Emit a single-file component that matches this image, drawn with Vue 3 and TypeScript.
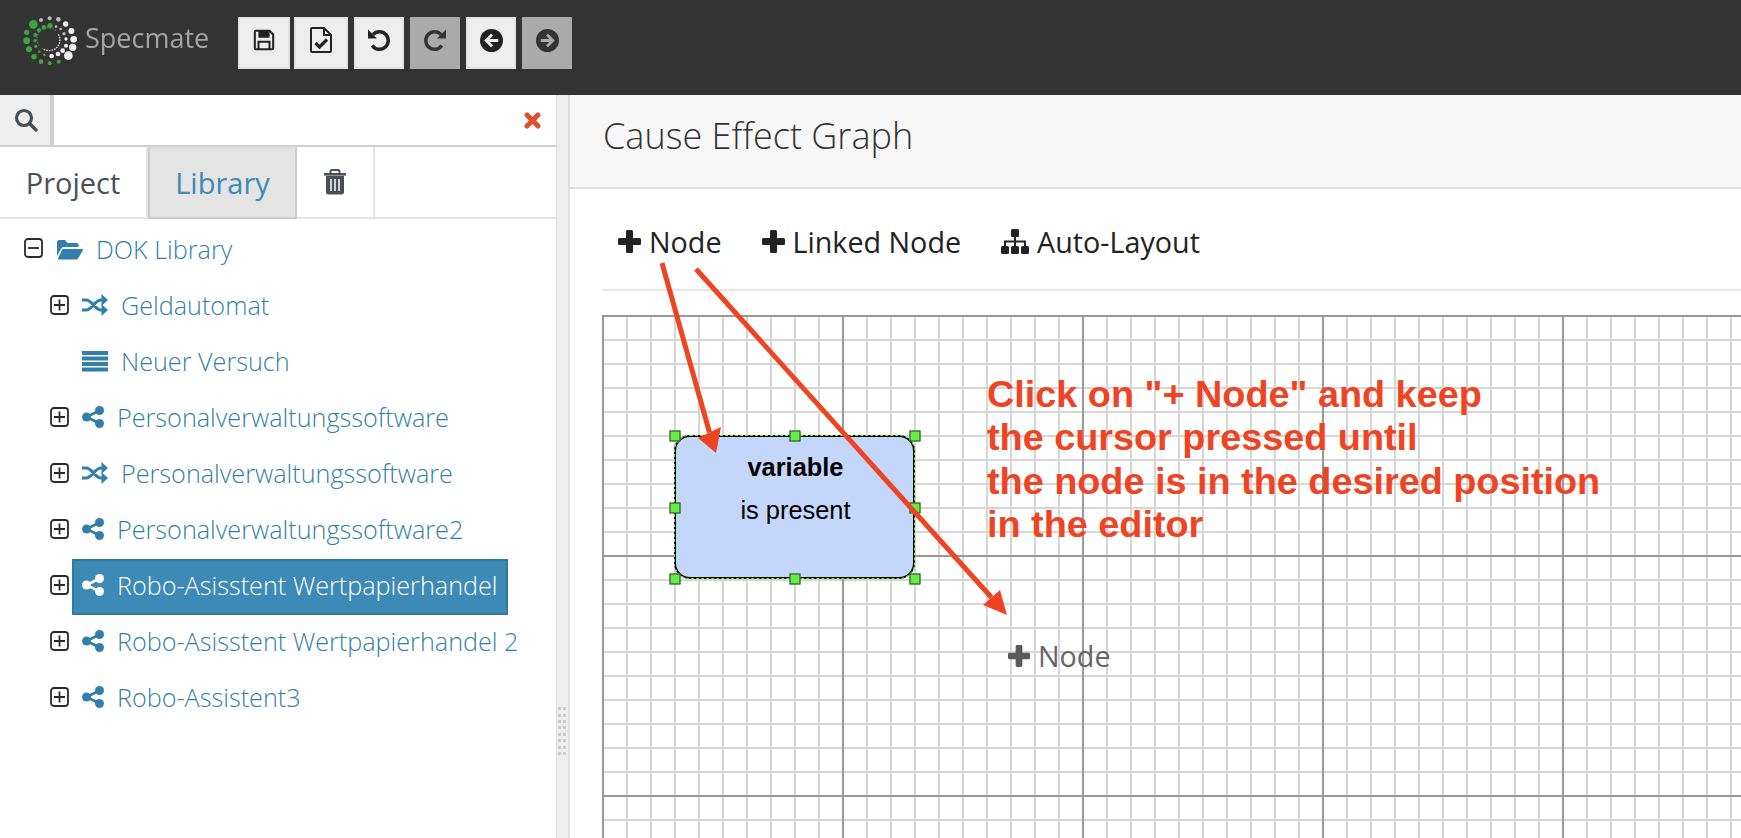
<template>
  <div class="app">
    <!-- top bar -->
    <header class="topbar">
      <div class="brand">
        <svg class="brand__mark" width="75" height="75" viewBox="0 0 225 225">
          <circle v-for="(d, i) in logoDots" :key="i" :cx="d[0]" :cy="d[1]" :r="d[2] + 1" :fill="d[3]" />
          <path d="M88 122A32 32 0 0 1 140 80" fill="none" stroke="#3a8f3a" stroke-width="4" stroke-dasharray="5 3" />
          <path d="M145 88A32 32 0 0 1 98 130" fill="none" stroke="#ddd" stroke-width="4" stroke-dasharray="5 3" />
        </svg>
        <span class="brand__name">Specmate</span>
      </div>
      <div class="actions">
        <button class="btn" style="width: 52px">
          <svg width="22" height="22" viewBox="0 0 24 24" fill="none" stroke="#222" stroke-width="2.2">
            <path d="M2 3a1 1 0 0 1 1-1h15l4 4v15a1 1 0 0 1-1 1H3a1 1 0 0 1-1-1z" />
            <path d="M7 2v6.5h10V2" fill="#222" />
            <path d="M6 22v-8h12v8" />
          </svg>
        </button>
        <button class="btn" style="width: 54px">
          <svg width="22" height="26" viewBox="0 0 22 26" fill="none" stroke="#222" stroke-width="2">
            <path d="M1 2a1 1 0 0 1 1-1h12l7 7v16a1 1 0 0 1-1 1H2a1 1 0 0 1-1-1z" />
            <path d="M14 1v7h7" />
            <path d="M5.500 16l4 4 7.500-7.500" stroke-width="3.200" />
          </svg>
        </button>
        <button class="btn">
          <svg width="24" height="24" viewBox="0 0 24 24">
            <path d="M6 6.500A8.800 8.800 0 1 1 5.200 17.500" fill="none" stroke="#222" stroke-width="3.400" />
            <path d="M1 1.500v9h9z" fill="#222" />
          </svg>
        </button>
        <button class="btn btn--off">
          <svg width="24" height="24" viewBox="0 0 24 24">
            <path d="M18 6.500A8.800 8.800 0 1 0 18.800 17.500" fill="none" stroke="#333" stroke-width="3.400" />
            <path d="M23 1.500v9h-9z" fill="#333" />
          </svg>
        </button>
        <button class="btn">
          <svg width="23" height="23" viewBox="0 0 24 24">
            <circle cx="12" cy="12" r="12" fill="#222" />
            <path d="M19 12H7M12.500 6L6.500 12l6 6" fill="none" stroke="#eee" stroke-width="3" />
          </svg>
        </button>
        <button class="btn btn--off">
          <svg width="23" height="23" viewBox="0 0 24 24">
            <circle cx="12" cy="12" r="12" fill="#333" />
            <path d="M5 12h12M11.500 6l6 6-6 6" fill="none" stroke="#aaa" stroke-width="3" />
          </svg>
        </button>
      </div>
    </header>

    <div class="body">
      <!-- left side panel -->
      <aside class="side">
        <div class="search">
          <div class="search__addon">
            <svg width="24" height="24" viewBox="0 0 24 24" fill="none" stroke="#454d55" stroke-width="3.200">
              <circle cx="10" cy="10" r="7.500" />
              <path d="M15.500 15.500L22 22" stroke-linecap="round" />
            </svg>
          </div>
          <div class="search__input">
            <svg width="17" height="17" viewBox="0 0 17 17" stroke="#e04f2a" stroke-width="5" stroke-linecap="round">
              <path d="M3 3l11 11M14 3L3 14" />
            </svg>
          </div>
        </div>

        <nav class="tabs">
          <div class="tab" style="width: 148px">Project</div>
          <div class="tab tab--active">Library</div>
          <div class="tab tab--trash">
            <svg width="24" height="26" viewBox="0 0 24 26" fill="#4a4f55">
              <path d="M1 4h22v2.600H1z" />
              <path d="M7.500 5V2.500A1.500 1.500 0 0 1 9 1h6a1.500 1.500 0 0 1 1.500 1.500V5" fill="none" stroke="#4a4f55" stroke-width="2" />
              <path d="M3 7h18v16a2.500 2.500 0 0 1-2.500 2.500h-13A2.500 2.500 0 0 1 3 23z" />
              <path d="M8 10v12M12 10v12M16 10v12" stroke="#fff" stroke-width="1.500" />
            </svg>
          </div>
        </nav>

        <div class="tree">
          <div v-for="row in rows" :key="row.label + row.icon" class="tree__row" :class="{ 'tree__row--root': row.icon === 'folder' }">
            <span class="tree__toggle">
              <svg v-if="row.toggle" width="19" height="20" viewBox="0 0 19 20" fill="none" stroke="#2b2b2b" stroke-width="1.800">
                <rect x="1" y="1" width="17" height="18" rx="3" />
                <path v-if="row.toggle === 'plus'" d="M9.500 4.500v11M4 10h11" />
                <path v-else d="M4 10h11" />
              </svg>
            </span>
            <span class="tree__label" :class="{ 'tree__label--selected': row.selected }">
              <svg v-if="row.icon === 'folder'" class="tree__icon" width="26" height="21" viewBox="0 0 26 21" fill="currentColor">
                <path d="M0 17V3a2 2 0 0 1 2-2h6l2.500 3h9a2 2 0 0 1 2 2v2H7a3 3 0 0 0-3 2z" />
                <path d="M6 10h19a1 1 0 0 1 .8 1.500L21 19.500a2 2 0 0 1-1.700 1H2a1 1 0 0 1-.8-1.500L5 11a2 2 0 0 1 1-1z" />
              </svg>
              <svg v-else-if="row.icon === 'shuffle'" class="tree__icon" width="26" height="24" viewBox="0 0 26 24">
                <path d="M0 7h4c6 0 9 10 15 10h2M0 17h4c6 0 9-10 15-10h2" fill="none" stroke="currentColor" stroke-width="3.200" />
                <path d="M19.500 1l6.500 6-6.500 6zM19.500 11l6.500 6-6.500 6z" fill="currentColor" />
              </svg>
              <svg v-else-if="row.icon === 'bars'" class="tree__icon" width="26" height="21" viewBox="0 0 26 21" fill="currentColor">
                <rect y="0" width="26" height="4" />
                <rect y="5.500" width="26" height="4" />
                <rect y="11" width="26" height="4" />
                <rect y="16.500" width="26" height="4" />
              </svg>
              <svg v-else class="tree__icon" width="22" height="22" viewBox="0 0 22 22" fill="currentColor">
                <circle cx="17.500" cy="4.500" r="4.500" />
                <circle cx="17.500" cy="17.500" r="4.500" />
                <circle cx="4.500" cy="11" r="4.500" />
                <path d="M4.500 11L17.500 4.500M4.500 11l13 6.500" stroke="currentColor" stroke-width="2.600" />
              </svg>
              <span>{{ row.label }}</span>
            </span>
          </div>
        </div>
      </aside>

      <!-- splitter -->
      <div class="splitter">
        <div class="splitter__grip">
          <i v-for="n in 16" :key="n"></i>
        </div>
      </div>

      <!-- main panel -->
      <main class="main">
        <h1 class="main__title">Cause Effect Graph</h1>
        <div class="toolbar">
          <span class="tool">
            <svg class="plus" width="23" height="23" viewBox="0 0 23 23" fill="currentColor">
              <rect x="8" y="0" width="7" height="23" rx="1.500" />
              <rect x="0" y="8" width="23" height="7" rx="1.500" />
            </svg>
            Node
          </span>
          <span class="tool">
            <svg class="plus" width="23" height="23" viewBox="0 0 23 23" fill="currentColor">
              <rect x="8" y="0" width="7" height="23" rx="1.500" />
              <rect x="0" y="8" width="23" height="7" rx="1.500" />
            </svg>
            Linked Node
          </span>
          <span class="tool">
            <svg class="plus" width="28" height="25" viewBox="0 0 28 25" fill="currentColor">
              <rect x="10" y="0" width="8" height="8" rx="1.500" />
              <rect x="0" y="17" width="8" height="8" rx="1.500" />
              <rect x="10" y="17" width="8" height="8" rx="1.500" />
              <rect x="20" y="17" width="8" height="8" rx="1.500" />
              <path d="M4 17v-4.500h20V17M14 8v9" fill="none" stroke="currentColor" stroke-width="2" />
            </svg>
            Auto-Layout
          </span>
        </div>

        <div class="canvas">
          <div class="node">
            <div class="node__dash"></div>
            <b class="node__title">variable</b>
            <span class="node__sub">is present</span>
            <div class="node__handles">
              <i v-for="h in handles" :key="h.x + '-' + h.y" class="handle" :style="{ left: h.x + '%', top: h.y + '%' }"></i>
            </div>
          </div>

          <div class="note">
            <div>Click on "+ Node" and keep</div>
            <div>the cursor pressed until</div>
            <div>the node is in the desired position</div>
            <div>in the editor</div>
          </div>

          <div class="ghost">
            <svg class="plus" width="22" height="22" viewBox="0 0 23 23" fill="#5a5a5a">
              <rect x="8" y="0" width="7" height="23" rx="1.500" />
              <rect x="0" y="8" width="23" height="7" rx="1.500" />
            </svg>
            Node
          </div>
        </div>

        <!-- annotation arrows over the panel -->
        <svg class="arrows" width="1171" height="743" viewBox="0 0 1171 743">
          <path d="M92 168L139.500 337.500M126 174L421.500 502.500" stroke="#ef4423" stroke-width="5" fill="none" />
          <path d="M146 358L128 343L151 332zM437 520L413 510L430 495z" fill="#ef4423" />
        </svg>
      </main>
    </div>
  </div>
</template>

<script setup lang="ts">
type Row = {
  label: string;
  icon: 'folder' | 'shuffle' | 'bars' | 'share';
  toggle?: 'plus' | 'minus';
  selected?: boolean;
};

const rows: Row[] = [
  { label: 'DOK Library', icon: 'folder', toggle: 'minus' },
  { label: 'Geldautomat', icon: 'shuffle', toggle: 'plus' },
  { label: 'Neuer Versuch', icon: 'bars' },
  { label: 'Personalverwaltungssoftware', icon: 'share', toggle: 'plus' },
  { label: 'Personalverwaltungssoftware', icon: 'shuffle', toggle: 'plus' },
  { label: 'Personalverwaltungssoftware2', icon: 'share', toggle: 'plus' },
  { label: 'Robo-Asisstent Wertpapierhandel', icon: 'share', toggle: 'plus', selected: true },
  { label: 'Robo-Asisstent Wertpapierhandel 2', icon: 'share', toggle: 'plus' },
  { label: 'Robo-Assistent3', icon: 'share', toggle: 'plus' },
];

const handles = [
  { x: 0, y: 0 }, { x: 50, y: 0 }, { x: 100, y: 0 },
  { x: 0, y: 50 }, { x: 100, y: 50 },
  { x: 0, y: 100 }, { x: 50, y: 100 }, { x: 100, y: 100 },
];

const G = '#3fa63f';
const W = '#f2f2f2';
const S = '#bbbbbb';

// logo dots, traced from the reference at 3x
const logoDots: [number, number, number, string][] = [
  [70, 58, 12, G], [50, 82, 7, G], [50, 107, 9, G], [57, 133, 8, G], [72, 155, 7, G],
  [93, 170, 6, G], [119, 175, 5, G], [146, 170, 5, G], [175, 152, 12, W], [188, 127, 10, W],
  [191, 103, 9, W], [184, 78, 8, W], [167, 57, 7, W], [145, 43, 6, S], [119, 40, 5, S], [93, 45, 5, S],
  [102, 67, 6, G], [120, 62, 7, G], [87, 76, 5, G], [76, 90, 5, G], [75, 107, 4, G], [77, 124, 4, G],
  [88, 140, 3, G], [103, 150, 3, G], [125, 153, 6, W], [144, 147, 6, W], [158, 137, 6, W], [168, 122, 5, W],
  [168, 102, 4, W], [162, 86, 4, S], [152, 72, 3, S], [138, 65, 3, S],
];
</script>

<style>
html,
body {
  margin: 0;
  overflow: hidden;
}
</style>

<style scoped>
.app {
  display: flex;
  flex-direction: column;
  height: 838px;
  font-family: 'Open Sans', 'Liberation Sans', sans-serif;
  background: #fff;
}
.topbar {
  display: flex;
  flex: 0 0 95px;
  background: #333;
}
.brand {
  position: relative;
  width: 238px;
  flex: 0 0 238px;
}
.brand__mark {
  margin: 5px 0 0 10px;
  filter: blur(0.4px);
}
.brand__name {
  position: absolute;
  left: 85px;
  top: 19px;
  font-size: 27px;
  font-weight: 400;
  color: #a5a5a5;
  filter: blur(0.5px);
}
.actions {
  display: flex;
  align-items: flex-start;
  padding-top: 17px;
  gap: 6px;
}
.actions .btn:nth-child(2) {
  margin-left: -2px;
}
.btn {
  display: flex;
  align-items: center;
  justify-content: center;
  width: 50px;
  height: 52px;
  padding: 0 0 6px;
  border: 2px solid #e2e2e2;
  background: #eee;
  box-sizing: border-box;
}
.btn--off {
  border: none;
  background: #aaa;
}
.body {
  flex: 1;
  display: flex;
  min-height: 0;
}
.side {
  flex: 0 0 557px;
  width: 557px;
  box-sizing: border-box;
  border-right: 1px solid #ddd;
}
.search {
  display: flex;
  height: 52px;
  border-bottom: 2px solid #d0d0d0;
  box-sizing: border-box;
}
.search__addon {
  flex: 0 0 48px;
  display: flex;
  align-items: center;
  justify-content: center;
  padding-left: 2px;
  background: #eee;
  border-right: 4px solid #d0d0d0;
}
.search__input {
  flex: 1;
  display: flex;
  align-items: center;
  justify-content: flex-end;
  padding-right: 15px;
}
.tabs {
  display: flex;
  height: 72px;
  border-bottom: 2px solid #e4e4e4;
  box-sizing: border-box;
}
.tab {
  display: flex;
  align-items: center;
  justify-content: center;
  padding-bottom: 2px;
  font-size: 29px;
  color: #495057;
  border-right: 2px solid #e4e4e4;
  box-sizing: border-box;
  height: 72px;
}
.tab--active {
  width: 149px;
  color: #3c8ab5;
  background: #e4e4e4;
  border: 2px solid #ccc;
  border-top-color: #ddd;
}
.tab--trash {
  width: 78px;
}
.tree {
  padding-top: 2px;
}
.tree__row {
  display: flex;
  align-items: center;
  height: 56px;
  padding-left: 50px;
  font-size: 25.2px;
  font-weight: 300;
  color: #337fab;
}
.tree__row--root {
  padding-left: 24px;
}
.tree__toggle {
  flex: 0 0 22px;
  display: flex;
  margin-top: -1px;
}
.tree__row--root .tree__toggle {
  flex-basis: 23px;
  margin-top: -2px;
}
.tree__label {
  display: flex;
  align-items: center;
  height: 56px;
  padding: 0 11px 0 10px;
  box-sizing: border-box;
  border: 2px solid transparent;
  border-left-width: 0;
}
.tree__label--selected {
  color: #fff;
  background: #3c8ab5;
  border: 2px solid #3279a2;
  margin-top: 3px;
  padding: 0 8px 3px;
}
.tree__icon {
  flex: none;
  margin-right: 13px;
}
.splitter {
  flex: 0 0 13px;
  box-sizing: border-box;
  background: #eee;
  border-right: 2px solid #e0e0e0;
  position: relative;
}
.splitter__grip {
  position: absolute;
  left: 0;
  bottom: 83px;
  display: grid;
  grid-template-columns: 3px 3px;
  column-gap: 2px;
  row-gap: 3.4px;
  padding-left: 1px;
}
.splitter__grip i {
  height: 3px;
  background: #ccc;
}
.main {
  flex: 1;
  position: relative;
  min-width: 0;
  overflow: hidden;
}
.main__title {
  margin: 0;
  height: 94px;
  box-sizing: border-box;
  padding-left: 33px;
  font-size: 36px;
  line-height: 82px;
  font-weight: 300;
  color: #333;
  background: #f7f7f7;
  border-bottom: 2px solid #ddd;
}
.toolbar {
  display: flex;
  align-items: center;
  gap: 40px;
  height: 102px;
  box-sizing: border-box;
  margin-left: 32px;
  padding: 4px 0 0 16px;
  border-bottom: 2px solid #e6e6e6;
  font-size: 28.7px;
  color: #222;
}
.tool {
  display: flex;
  align-items: center;
  gap: 8px;
}
.plus {
  flex: none;
}
.canvas {
  position: relative;
  height: 523px;
  margin: 24px 0 0 32px;
  background-color: #fff;
  background-image: linear-gradient(to right, #999 2px, transparent 2px),
    linear-gradient(#999 2px, transparent 2px),
    linear-gradient(to right, #d6d6d6 2px, transparent 2px),
    linear-gradient(#d6d6d6 2px, transparent 2px);
  background-size: 240px 240px, 240px 240px, 24px 24px, 24px 24px;
}
.node {
  position: absolute;
  left: 72px;
  top: 120px;
  width: 241px;
  height: 144px;
  box-sizing: border-box;
  display: flex;
  flex-direction: column;
  align-items: center;
  padding: 9px 0 0 2px;
  background: #c4d7fb;
  border: 2px solid #000;
  border-radius: 16px;
  font-family: 'Liberation Sans', Arial, sans-serif;
  font-size: 25.4px;
  line-height: 43px;
  color: #000;
}
.node__dash {
  position: absolute;
  inset: -2px;
  border: 1.5px dashed #66ee44;
  border-radius: 16px;
}
.node__title {
  position: relative;
  font-weight: 700;
}
.node__sub {
  position: relative;
}
.node__handles {
  position: absolute;
  inset: -1px -2px -2px -1px;
}
.handle {
  position: absolute;
  width: 11px;
  height: 11px;
  box-sizing: border-box;
  transform: translate(-50%, -50%);
  background: #66ee44;
  border: 1px solid #333;
}
.note {
  position: absolute;
  left: 385px;
  top: 58px;
  font-family: 'Liberation Sans', Arial, sans-serif;
  font-size: 37.8px;
  font-weight: 700;
  line-height: 43.3px;
  white-space: nowrap;
  color: #ef4423;
}
.ghost {
  position: absolute;
  left: 406px;
  top: 323px;
  display: flex;
  align-items: center;
  gap: 8px;
  font-size: 28.7px;
  line-height: 36px;
  color: #666;
}
.arrows {
  position: absolute;
  left: 0;
  top: 0;
  pointer-events: none;
}
</style>
